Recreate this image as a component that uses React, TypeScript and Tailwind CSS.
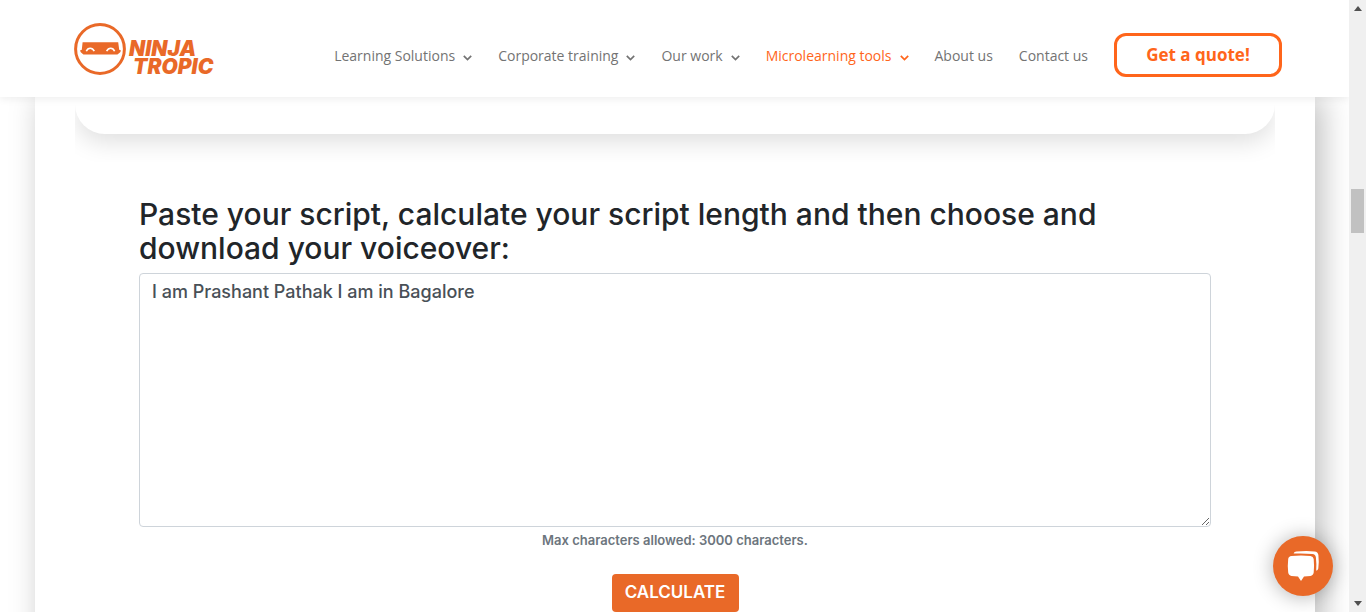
import { useState } from 'react';

type NavItem = { label: string; menu?: boolean; active?: boolean };

const navItems: NavItem[] = [
  { label: 'Learning Solutions', menu: true },
  { label: 'Corporate training', menu: true },
  { label: 'Our work', menu: true },
  { label: 'Microlearning tools', menu: true, active: true },
  { label: 'About us' },
  { label: 'Contact us' },
];

function Chevron() {
  return (
    <svg viewBox="0 0 9 6" className="mt-1 h-[6px] w-[9px]" fill="none" stroke="currentColor" strokeWidth="1.7" aria-hidden="true">
      <path d="M0.8 0.8 4.5 4.5 8.2 0.8" />
    </svg>
  );
}

function Logo() {
  return (
    <a href="#home" className="flex items-center gap-[3px] text-[#e96928]">
      <svg viewBox="0 0 52 52" className="size-[52px]" aria-hidden="true">
        <circle cx="26" cy="26" r="24.4" fill="none" stroke="currentColor" strokeWidth="3" />
        <path
          d="M8.6 19.2H44.2L45.2 26.8 47 27.4 46.2 29.2 43.4 31.6H9.4L6.8 29.2 6 27.4 7.8 26.8Z"
          fill="currentColor"
        />
        <path d="M12.3 28.2C14 24.2 18.3 24.2 20.3 28.2M32.6 28.2C34.6 24.2 38.9 24.2 40.6 28.2" fill="none" stroke="#fff" strokeWidth="1.6" />
      </svg>
      <span className="flex flex-col pt-[18px] text-[21px] leading-[18px] font-black italic">
        <span>NINJA</span>
        <span className="pl-1">TROPIC</span>
      </span>
    </a>
  );
}

function Header() {
  return (
    <header className="relative z-10 flex h-[97px] shrink-0 items-center justify-between bg-white pr-[67px] pl-[74px] shadow-[0_2px_8px_rgba(0,0,0,0.07)]">
      <Logo />
      <div className="flex items-center gap-[26px] pt-[13px] font-['Open_Sans',sans-serif]">
        <nav className="flex items-center gap-[26px] pt-0.5 text-sm text-[#737373]">
          {navItems.map((item) =>
            item.menu ? (
              <button
                key={item.label}
                type="button"
                aria-haspopup="menu"
                className={item.active ? 'flex items-center gap-2 font-medium text-[#ff651b]' : 'flex items-center gap-2'}
              >
                {item.label}
                <Chevron />
              </button>
            ) : (
              <a key={item.label} href="#page">
                {item.label}
              </a>
            ),
          )}
        </nav>
        <a
          href="#quote"
          className="flex h-11 w-[168px] items-center justify-center rounded-xl border-3 border-[#ff651b] text-[17px] font-bold text-[#ff651b]"
        >
          Get a quote!
        </a>
      </div>
    </header>
  );
}

function ScriptForm() {
  const [script, setScript] = useState('I am Prashant Pathak I am in Bagalore');
  return (
    <form className="flex flex-col items-center px-16 pt-[35px]" onSubmit={(e) => e.preventDefault()}>
      <label htmlFor="script" className="mb-2 w-full text-[30px] leading-[34px] font-medium text-[#212529]">
        Paste your script, calculate your script length and then choose and download your voiceover:
      </label>
      <textarea
        id="script"
        value={script}
        maxLength={3000}
        onChange={(e) => setScript(e.target.value)}
        className="block h-[254px] w-full resize rounded border border-[#ced4da] bg-white px-3 py-1.5 text-lg leading-6 font-medium text-[#495057] outline-none"
      />
      <small className="mt-[3px] text-[13px] leading-5 font-semibold text-[#6c757d]">Max characters allowed: 3000 characters.</small>
      <button type="submit" className="mt-6 h-[38px] w-[127px] rounded bg-[#e96928] text-[17px] font-semibold text-white">
        CALCULATE
      </button>
    </form>
  );
}

function ChatButton() {
  return (
    <button
      type="button"
      aria-label="Open chat"
      className="absolute right-4 bottom-4 z-20 size-[60px] rounded-full bg-[#e96928] shadow-[0_1px_20px_rgba(0,0,0,0.3)]"
    >
      <svg viewBox="0 0 60 60" className="size-full" fill="#fff" aria-hidden="true">
        <path d="M18.5 19.9Q28 18.9 37.5 19.9Q40.3 20.2 40.7 23Q41.4 29.8 40.7 36.6Q40.3 39.6 37.5 39.9L31 40.4L28 45L25 40.4L18.5 39.9Q15.6 39.6 15.2 36.6Q14.4 29.8 15.2 23Q15.6 20.2 18.5 19.9Z" />
        <path d="M20.6 17.6Q21.2 15.8 23.4 15.6Q32 14.7 41.5 15.4Q45 15.8 45.4 19Q46.2 26.5 45.3 32.5Q44.9 34.2 43.2 34.8Q43.7 28 42.9 21.5Q42.5 18.4 39.4 18Q30 17 20.6 17.6Z" />
      </svg>
    </button>
  );
}

function ScrollBar() {
  return (
    <div className="flex w-[17px] shrink-0 flex-col items-center justify-between bg-[#f0f0f0] py-[6px]" aria-hidden="true">
      <svg viewBox="0 0 8 5" className="h-[5px] w-[8px]" fill="#505050">
        <path d="M4 0 8 5H0Z" />
      </svg>
      <div className="flex w-full flex-1 flex-col items-center pt-[178px]">
        <div className="h-11 w-[13px] bg-[#c1c1c1]" />
      </div>
      <svg viewBox="0 0 8 5" className="h-[5px] w-[8px]" fill="#505050">
        <path d="M0 0H8L4 5Z" />
      </svg>
    </div>
  );
}

export default function App() {
  return (
    <div className="flex h-screen overflow-hidden bg-white font-['Inter',sans-serif]">
      <div className="relative flex min-w-0 flex-1 flex-col overflow-hidden">
        <Header />
        <main className="flex shrink-0 flex-col pr-[34px] pl-[35px]">
          <section className="bg-white px-10 pb-16 shadow-[7px_0_30px_rgba(0,0,0,0.26)]">
            <div className="overflow-hidden pb-[28px]">
              <div className="h-[37px] rounded-b-[30px] bg-white shadow-[0_8px_25px_rgba(0,0,0,0.13)]" />
            </div>
            <ScriptForm />
          </section>
        </main>
        <ChatButton />
      </div>
      <ScrollBar />
    </div>
  );
}
